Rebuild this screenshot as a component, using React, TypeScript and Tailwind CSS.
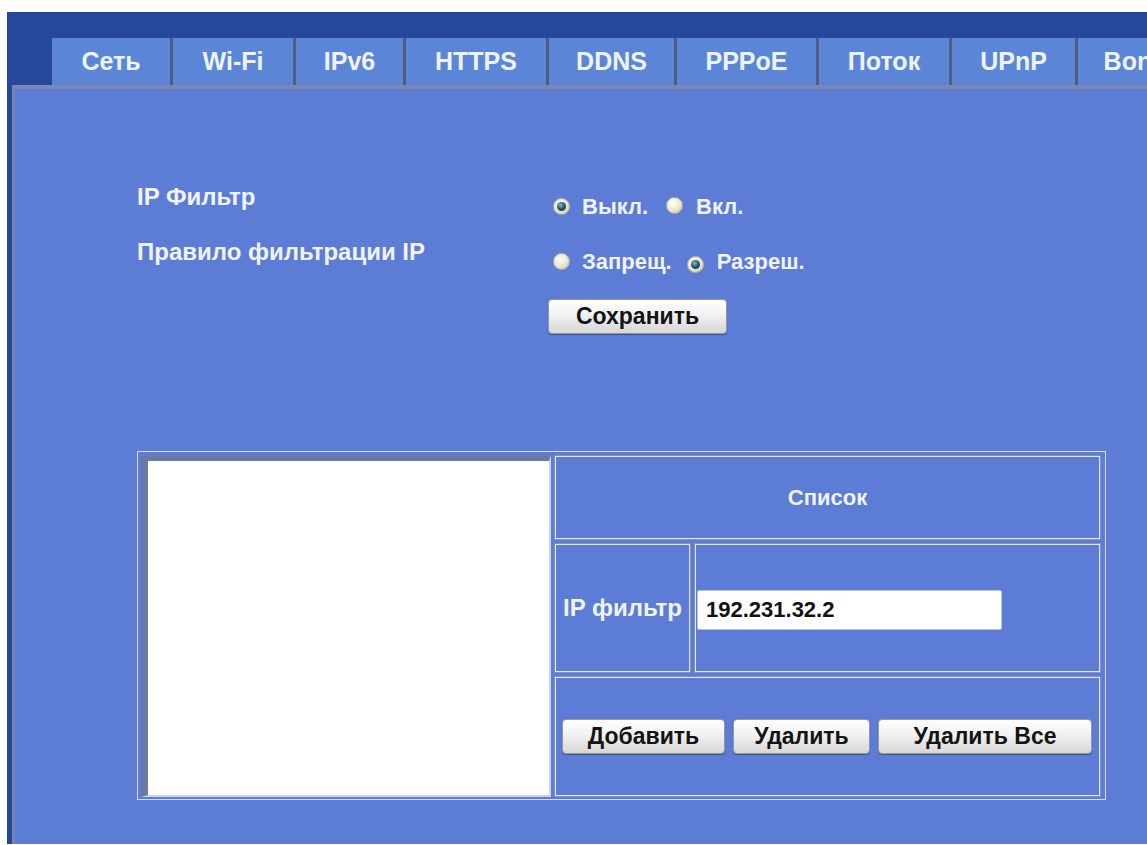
import React from "react";

const tabs = [
  { name: "Сеть", w: "w-[118px]" },
  { name: "Wi-Fi", w: "w-[123px]" },
  { name: "IPv6", w: "w-[110px]" },
  { name: "HTTPS", w: "w-[143px]" },
  { name: "DDNS", w: "w-[128px]" },
  { name: "PPPoE", w: "w-[142px]" },
  { name: "Поток", w: "w-[133px]" },
  { name: "UPnP", w: "w-[126px]" },
  { name: "Bonjour", w: "w-[150px]" },
];

function Radio({ checked }: { checked?: boolean }) {
  return (
    <span className="inline-flex w-[17px] h-[17px] shrink-0 rounded-full items-center justify-center border border-[#b9b6a6] bg-[radial-gradient(circle_at_40%_35%,#fffef4_0%,#ebe6cf_55%,#b3ae98_100%)]">
      {checked && (
        <span className="w-[9px] h-[9px] rounded-full bg-[radial-gradient(circle_at_40%_35%,#7fc0d6_0%,#23526f_50%,#0b2033_100%)]" />
      )}
    </span>
  );
}

function Btn({ label, w }: { label: string; w: string }) {
  return (
    <button
      className={`${w} h-[35px] rounded-[4px] border border-[#9a9a9a] bg-[linear-gradient(#ffffff,#f1f1f1_45%,#d6d6d6)] shadow-[0_1px_1px_rgba(0,0,0,0.35)] text-[23px] font-bold text-[#141414] leading-none`}
    >
      {label}
    </button>
  );
}

export default function App() {
  return (
    <div className="min-h-screen bg-white pt-[12px] pl-[7px] font-['Liberation_Sans',Arial,sans-serif] overflow-hidden">
      <div className="bg-[#26489c] pt-[26px]">
        {/* tab strip */}
        <div className="flex h-[47px] pl-[45px] overflow-hidden">
          {tabs.map((t, i) => (
            <div
              key={t.name}
              className={`${t.w} shrink-0 h-full bg-[#5b86d8] flex items-center justify-center text-[25px] font-bold text-[#eef4ff] ${
                i > 0 ? "border-l-[3px] border-[#4e5c86]" : ""
              }`}
            >
              {t.name}
            </div>
          ))}
        </div>

        {/* settings panel */}
        <div className="ml-[5px] min-h-[759px] bg-[#5c7cd6] border-t-[4px] border-l-[3px] border-t-[#7e88ac] border-l-[#7884ac] pl-[122px] pt-[94px] text-[#f0f4ff]">
          <div className="flex">
            <div className="w-[411px] flex flex-col gap-[27px] text-[24px] font-bold">
              <div className="h-[28px] leading-[28px]">IP Фильтр</div>
              <div className="h-[28px] leading-[28px]">Правило фильтрации IP</div>
            </div>
            <div className="flex flex-col pt-[9px] text-[22px] font-bold">
              <div className="h-[28px] flex items-center pl-[5px]">
                <Radio checked />
                <span className="ml-[12px]">Выкл.</span>
                <span className="ml-[18px]">
                  <Radio />
                </span>
                <span className="ml-[13px]">Вкл.</span>
              </div>
              <div className="h-[28px] mt-[27px] flex items-center pl-[5px]">
                <Radio />
                <span className="ml-[12px]">Запрещ.</span>
                <span className="ml-[15px]">
                  <Radio checked />
                </span>
                <span className="ml-[13px]">Разреш.</span>
              </div>
              <div className="mt-[24px]">
                <Btn label="Сохранить" w="w-[179px]" />
              </div>
            </div>
          </div>

          {/* filter list table */}
          <div className="mt-[117px] w-[969px] h-[349px] border border-[#d6def7] pt-[3px] pl-[3px] pr-[5px] pb-[2px] flex gap-[4px]">
            <div className="w-[410px] h-full bg-white border-l-[7px] border-t-[6px] border-r-2 border-b-2 border-l-[#6c79a6] border-t-[#6c79a6] border-r-[#c9d2f0] border-b-[#c9d2f0]" />
            <div className="w-[545px] flex flex-col gap-[5px] pt-[1px]">
              <div className="h-[83px] border border-[#e2e9fd] shadow-[0_0_0_1px_#8290c0] flex items-center justify-center text-[22px] font-bold">
                Список
              </div>
              <div className="h-[128px] flex gap-[5px]">
                <div className="w-[135px] h-full border border-[#e2e9fd] shadow-[0_0_0_1px_#8290c0] flex items-center justify-center text-[24px] font-bold whitespace-nowrap">
                  IP фильтр
                </div>
                <div className="w-[405px] h-full border border-[#e2e9fd] shadow-[0_0_0_1px_#8290c0] flex items-center pl-[1px]">
                  <input
                    defaultValue="192.231.32.2"
                    className="w-[305px] h-[40px] mt-[4px] bg-white rounded-[2px] border border-[#b8c2e0] pl-[8px] text-[22px] font-bold text-[#111] outline-none"
                  />
                </div>
              </div>
              <div className="h-[119px] border border-[#e2e9fd] shadow-[0_0_0_1px_#8290c0] flex items-center pl-[6px] gap-[8px]">
                <Btn label="Добавить" w="w-[163px]" />
                <Btn label="Удалить" w="w-[137px]" />
                <Btn label="Удалить Все" w="w-[214px]" />
              </div>
            </div>
          </div>
        </div>
      </div>
    </div>
  );
}
